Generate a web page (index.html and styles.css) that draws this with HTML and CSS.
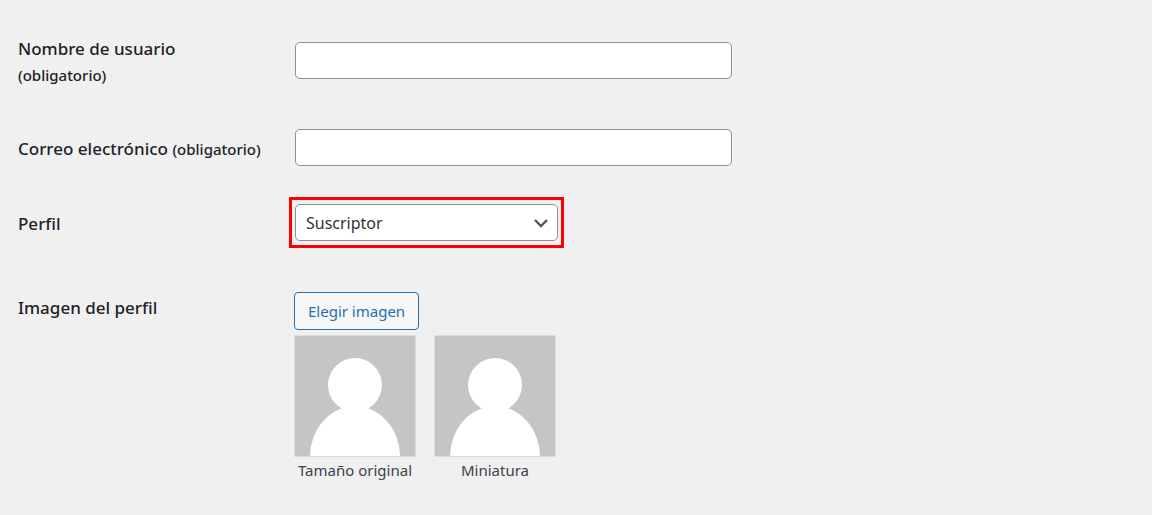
FILE: index.html
```
<!DOCTYPE html>
<html lang="es">
<head>
    <meta charset="UTF-8">
    <meta name="viewport" content="width=device-width, initial-scale=1.0">
    <title>Perfil de usuario</title>
    <link rel="stylesheet" href="styles.css">
</head>
<body>
    <form class="user-form" action="#" method="post">
        <div class="form-row">
            <label class="form-label" for="user_login">Nombre de usuario<br><span class="description">(obligatorio)</span></label>
            <div class="form-field">
                <input class="text-input" type="text" name="user_login" id="user_login">
            </div>
        </div>
        <div class="form-row">
            <label class="form-label" for="email">Correo electrónico <span class="description">(obligatorio)</span></label>
            <div class="form-field">
                <input class="text-input" type="email" name="email" id="email">
            </div>
        </div>
        <div class="form-row">
            <label class="form-label" for="role">Perfil</label>
            <div class="form-field">
                <div class="select-box">
                    <select class="role-select" name="role" id="role">
                        <option value="subscriber">Suscriptor</option>
                    </select>
                    <svg class="select-arrow" viewBox="0 0 16 16" aria-hidden="true">
                        <path d="M2 5l6 6 6-6" fill="none" stroke="#50575e" stroke-width="2.4"/>
                    </svg>
                </div>
            </div>
        </div>

        <!-- Profile picture -->
        <div class="form-row picture-row">
            <label class="form-label" for="choose_image">Imagen del perfil</label>
            <div class="form-field">
                <button class="button" type="button" id="choose_image">Elegir imagen</button>
                <div class="previews">
                    <figure class="preview">
                        <svg class="avatar" viewBox="0 0 120 120" aria-hidden="true">
                            <circle cx="60" cy="49" r="27"/>
                            <ellipse cx="60" cy="121" rx="45" ry="51"/>
                        </svg>
                        <figcaption>Tamaño original</figcaption>
                    </figure>
                    <figure class="preview">
                        <svg class="avatar" viewBox="0 0 120 120" aria-hidden="true">
                            <circle cx="60" cy="49" r="27"/>
                            <ellipse cx="60" cy="121" rx="45" ry="51"/>
                        </svg>
                        <figcaption>Miniatura</figcaption>
                    </figure>
                </div>
            </div>
        </div>
    </form>
</body>
</html>
```
FILE: styles.css
```
body {
    margin: 0;
    background: #f0f0f0;
    color: #3c434a;
    font-family: "Segoe UI", "Noto Sans", "Open Sans", sans-serif;
    font-size: 15px;
    line-height: 26px;
}

.user-form {
    padding: 10px 18px;
}

.form-row {
    display: grid;
    grid-template-columns: 256px minmax(0, 1fr);
    column-gap: 20px;
    align-items: center;
}

.form-label {
    align-self: start;
    padding: 26px 0 22px;
    color: #1d2327;
    font-size: 17px;
    font-weight: 500;
}

.description {
    font-size: 15px;
}

.form-field {
    padding: 19px 0;
}

.text-input,
.role-select {
    display: block;
    box-sizing: border-box;
    width: 100%;
    height: 37px;
    padding: 0 10px;
    border: 1px solid #8c8f94;
    border-radius: 5px;
    background: #fff;
    color: #2c3338;
    font-family: inherit;
    font-size: 16px;
}

.text-input {
    max-width: 437px;
    margin: 0 1px;
}

.select-box {
    position: relative;
    max-width: 263px;
    padding: 1px 0;
    margin: -1px 1px;
    outline: 3px solid #ff0000;
    outline-offset: 3px;
}

.role-select {
    appearance: none;
}

.select-arrow {
    position: absolute;
    top: 12px;
    right: 9px;
    width: 16px;
    height: 16px;
    pointer-events: none;
}

.picture-row {
    margin-top: 9px;
}

.picture-row .form-field {
    padding-top: 23px;
}

.button {
    display: block;
    height: 38px;
    padding: 0 13px;
    border: 1px solid #2271b1;
    border-radius: 4px;
    background: #f6f7f7;
    color: #2271b1;
    font-family: inherit;
    font-size: 15px;
    cursor: pointer;
}

.previews {
    display: flex;
    gap: 18px;
    margin-top: 5px;
}

.preview {
    margin: 0;
    text-align: center;
}

.avatar {
    display: block;
    width: 120px;
    height: 120px;
    border: 1px solid #ddd;
    background: #c5c5c5;
    fill: #fff;
}
```
